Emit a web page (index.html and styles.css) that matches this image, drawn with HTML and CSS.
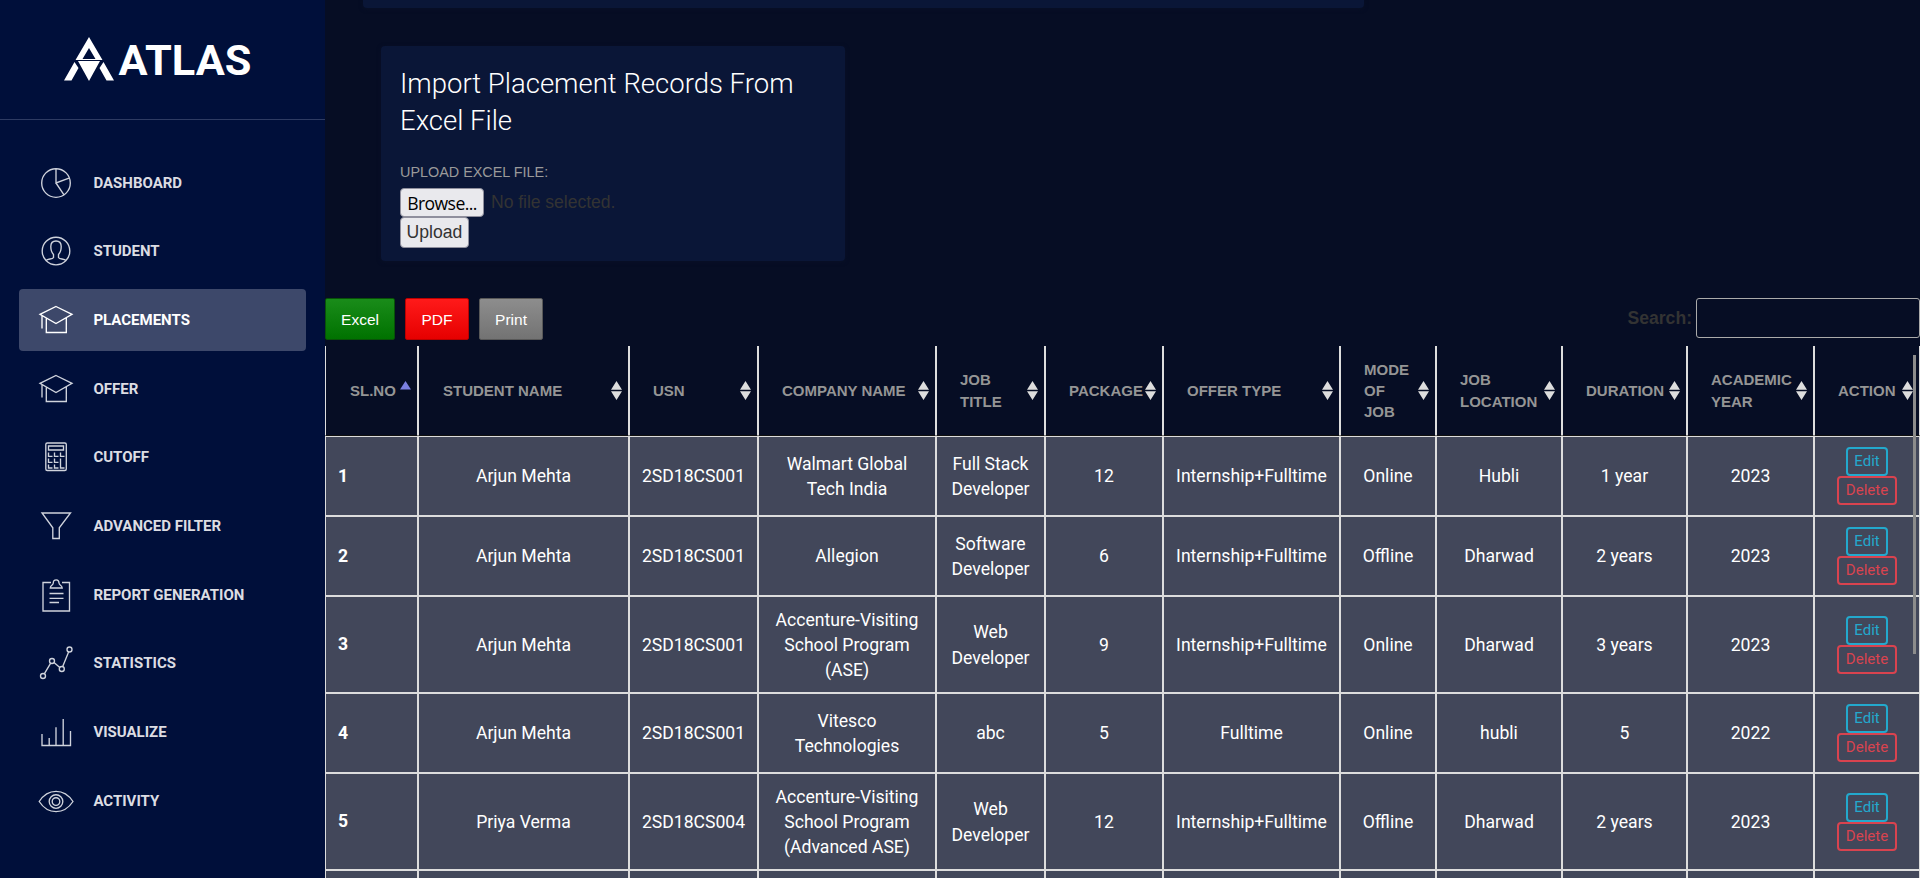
FILE: index.html
```
<!DOCTYPE html>
<html lang="en">
<head>
<meta charset="utf-8">
<title>Atlas - Placements</title>
<link rel="stylesheet" href="styles.css">
</head>
<body>
<div class="app">
  <aside class="sidebar">
    <div class="brand">
      <svg class="brand-mark" width="50" height="45" viewBox="0 0 50 45"><path fill="#fff" fill-rule="evenodd" d="M25 0 38.500 23H11.500ZM25 11 18.500 22H31.500ZM14 24H36L25 44ZM10.500 25 14.500 31 7.500 43.500H0ZM39.500 25 35.500 31 42.500 43.500H50Z"/></svg>
      <span class="brand-name">ATLAS</span>
    </div>
    <nav class="menu">
      <a class="item"><svg class="icon" viewBox="0 0 36 36"><circle cx="18" cy="18" r="14.300"/><path d="M18 3.700V18L31 13.200M18 18 26 29.800"/></svg>Dashboard</a>
      <a class="item"><svg class="icon" viewBox="0 0 36 36"><circle cx="18" cy="18" r="13.800"/><path d="M8 27.500C10 25.500 14.500 26.500 15.500 24.500V21.500C13.500 19.500 12.800 17 12.800 13.500 12.800 9.500 15 8 18 8S23.200 9.500 23.200 13.500C23.200 17 22.500 19.500 20.500 21.500V24.500C21.500 26.500 26 25.500 28 27.500"/></svg>Student</a>
      <a class="item active"><svg class="icon" viewBox="0 0 36 36"><path d="M18 4.500 34 12.300 18 21.500 2 12.300ZM8.300 16V30.500H28.300V16M4 13.500V26.500"/></svg>Placements</a>
      <a class="item"><svg class="icon" viewBox="0 0 36 36"><path d="M18 4.500 34 12.300 18 21.500 2 12.300ZM8.300 16V30.500H28.300V16M4 13.500V26.500"/></svg>Offer</a>
      <a class="item"><svg class="icon" viewBox="0 0 36 36"><rect x="7.800" y="4" width="20.500" height="27.500" rx="1.500"/><path d="M10.500 7H25.500V11H10.500ZM10.500 13.500V17.300H14.500M16.500 13.500V17.300H20.500M22.500 13.500V17.300H26.500M10.500 19.500V23.300H14.500M16.500 19.500V23.300H20.500M22.500 19.500V29H26.500M10.500 25.500V29H14.500M16.500 25.500V29H20.500"/></svg>Cutoff</a>
      <a class="item"><svg class="icon" viewBox="0 0 36 36"><path d="M4 5H32.500L21.300 19.800V30.500H14.800V19.800Z"/></svg>Advanced Filter</a>
      <a class="item"><svg class="icon" viewBox="0 0 36 36"><path d="M13 5.500H5V34H31.500V5.500H24M12.300 11C12.300 8 15 8.500 15.300 6 15.300 3.500 16.500 2.800 18.200 2.800S21 3.500 21 6C21.300 8.500 24 8 24.200 11ZM11.500 16.500H25.500M11.500 21.300H25.500M11.500 25.500H21"/></svg>Report Generation</a>
      <a class="item"><svg class="icon" viewBox="0 0 36 36"><circle cx="5" cy="31" r="2.500"/><circle cx="14" cy="16" r="2.500"/><circle cx="23.800" cy="24" r="2.500"/><circle cx="31.500" cy="4.500" r="2.500"/><path d="M6.300 28.800 12.700 18.200M16 17.600 21.800 22.400M24.700 21.600 30.600 6.900"/></svg>Statistics</a>
      <a class="item"><svg class="icon" viewBox="0 0 36 36"><path d="M4 20V31.500H32.500V17M11.200 24V31.500M18 13.200V31.500M25.200 5V31.500"/></svg>Visualize</a>
      <a class="item"><svg class="icon" viewBox="0 0 36 36"><path d="M1.200 18.500C10 5 26 5 35 18.500 26 32 10 32 1.200 18.500Z"/><circle cx="18" cy="18.500" r="6.800"/><circle cx="18" cy="18.500" r="3.800"/></svg>Activity</a>
    </nav>
  </aside>

  <main class="content">
    <div class="card card-prev"></div>
    <section class="card card-import">
      <h3 class="card-title">Import Placement Records From<br>Excel File</h3>
      <label class="upload-label">Upload Excel File:</label>
      <div class="file-row"><span class="form-btn browse">Browse...</span><span class="file-name">No file selected.</span></div>
      <span class="form-btn submit">Upload</span>
    </section>

    <div class="toolbar">
      <div class="exports">
        <span class="export excel">Excel</span>
        <span class="export pdf">PDF</span>
        <span class="export print">Print</span>
      </div>
      <label class="search">Search:<input class="search-input" type="text"></label>
    </div>

    <table class="records">
      <colgroup><col class="c1"><col class="c2"><col class="c3"><col class="c4"><col class="c5"><col class="c6"><col class="c7"><col class="c8"><col class="c9"><col class="c10"><col class="c11"><col class="c12"></colgroup>
      <thead>
        <tr>
          <th><div class="th asc wide">SL.NO<svg class="sort" viewBox="0 0 11 19"><path d="M5.500 0 11 8.500H0Z"/></svg></div></th>
          <th><div class="th wide">Student Name<svg class="sort" viewBox="0 0 11 19"><path d="M5.500 0 11 8.700H0ZM0 10.300H11L5.500 19Z"/></svg></div></th>
          <th><div class="th">USN<svg class="sort" viewBox="0 0 11 19"><path d="M5.500 0 11 8.700H0ZM0 10.300H11L5.500 19Z"/></svg></div></th>
          <th><div class="th">Company Name<svg class="sort" viewBox="0 0 11 19"><path d="M5.500 0 11 8.700H0ZM0 10.300H11L5.500 19Z"/></svg></div></th>
          <th><div class="th"><span>Job<br>Title</span><svg class="sort" viewBox="0 0 11 19"><path d="M5.500 0 11 8.700H0ZM0 10.300H11L5.500 19Z"/></svg></div></th>
          <th><div class="th">Package<svg class="sort" viewBox="0 0 11 19"><path d="M5.500 0 11 8.700H0ZM0 10.300H11L5.500 19Z"/></svg></div></th>
          <th><div class="th">Offer Type<svg class="sort" viewBox="0 0 11 19"><path d="M5.500 0 11 8.700H0ZM0 10.300H11L5.500 19Z"/></svg></div></th>
          <th><div class="th"><span>Mode<br>of<br>Job</span><svg class="sort" viewBox="0 0 11 19"><path d="M5.500 0 11 8.700H0ZM0 10.300H11L5.500 19Z"/></svg></div></th>
          <th><div class="th"><span>Job<br>Location</span><svg class="sort" viewBox="0 0 11 19"><path d="M5.500 0 11 8.700H0ZM0 10.300H11L5.500 19Z"/></svg></div></th>
          <th><div class="th">Duration<svg class="sort" viewBox="0 0 11 19"><path d="M5.500 0 11 8.700H0ZM0 10.300H11L5.500 19Z"/></svg></div></th>
          <th><div class="th"><span>Academic<br>Year</span><svg class="sort" viewBox="0 0 11 19"><path d="M5.500 0 11 8.700H0ZM0 10.300H11L5.500 19Z"/></svg></div></th>
          <th><div class="th">Action<svg class="sort" viewBox="0 0 11 19"><path d="M5.500 0 11 8.700H0ZM0 10.300H11L5.500 19Z"/></svg></div></th>
        </tr>
      </thead>
      <tbody>
        <tr class="short"><td class="num">1</td><td>Arjun Mehta</td><td>2SD18CS001</td><td>Walmart Global<br>Tech India</td><td>Full Stack<br>Developer</td><td>12</td><td>Internship+Fulltime</td><td>Online</td><td>Hubli</td><td>1 year</td><td>2023</td><td class="act-cell"><div class="actions"><span class="act edit">Edit</span><span class="act del">Delete</span></div></td></tr>
        <tr class="short"><td class="num">2</td><td>Arjun Mehta</td><td>2SD18CS001</td><td>Allegion</td><td>Software<br>Developer</td><td>6</td><td>Internship+Fulltime</td><td>Offline</td><td>Dharwad</td><td>2 years</td><td>2023</td><td class="act-cell"><div class="actions"><span class="act edit">Edit</span><span class="act del">Delete</span></div></td></tr>
        <tr class="tall"><td class="num">3</td><td>Arjun Mehta</td><td>2SD18CS001</td><td>Accenture-Visiting<br>School Program<br>(ASE)</td><td>Web<br>Developer</td><td>9</td><td>Internship+Fulltime</td><td>Online</td><td>Dharwad</td><td>3 years</td><td>2023</td><td class="act-cell"><div class="actions"><span class="act edit">Edit</span><span class="act del">Delete</span></div></td></tr>
        <tr class="short"><td class="num">4</td><td>Arjun Mehta</td><td>2SD18CS001</td><td>Vitesco<br>Technologies</td><td>abc</td><td>5</td><td>Fulltime</td><td>Online</td><td>hubli</td><td>5</td><td>2022</td><td class="act-cell"><div class="actions"><span class="act edit">Edit</span><span class="act del">Delete</span></div></td></tr>
        <tr class="tall"><td class="num">5</td><td>Priya Verma</td><td>2SD18CS004</td><td>Accenture-Visiting<br>School Program<br>(Advanced ASE)</td><td>Web<br>Developer</td><td>12</td><td>Internship+Fulltime</td><td>Offline</td><td>Dharwad</td><td>2 years</td><td>2023</td><td class="act-cell"><div class="actions"><span class="act edit">Edit</span><span class="act del">Delete</span></div></td></tr>
        <tr class="short"><td></td><td></td><td></td><td></td><td></td><td></td><td></td><td></td><td></td><td></td><td></td><td></td></tr>
      </tbody>
    </table>
    <div class="scroll-thumb"></div>
  </main>
</div>
</body>
</html>
```
FILE: styles.css
```
* { box-sizing: border-box; }
body { margin: 0; height: 878px; overflow: hidden; background: #060d24; font-family: "Liberation Sans", Arial, sans-serif; font-size: 17.6px; line-height: 1.42857; color: #333; }
.app { display: flex; height: 878px; overflow: hidden; }

.sidebar { flex: 0 0 325px; background: #000f3a; }
.brand { height: 120px; border-bottom: 1px solid #2e3b62; display: flex; padding: 37px 0 0 63.500px; gap: 5px; }
.brand-name { color: #fff; font: bold 43.300px/48px Roboto, sans-serif; }
.menu { display: flex; flex-direction: column; gap: 7px; padding: 31.700px 19px 0; }
.item { height: 61.700px; display: flex; align-items: center; gap: 19px; padding-left: 19.400px; border-radius: 4px; color: #dcdde3; font: bold 15px/30px Roboto, sans-serif; text-transform: uppercase; }
.icon { width: 36px; height: 36px; fill: none; stroke: #cfd3dc; stroke-width: 1.350; }
.active { background: #3d486a; color: #fff; }
.active .icon { stroke: #fff; }

.content { position: relative; flex: 1; }
.card { background: #0a1637; border-radius: 4px; box-shadow: 0 1px 4px rgba(10, 18, 40, .8); }
.card-prev { width: 1001px; height: 8px; margin-left: 38px; border-radius: 0 0 4px 4px; }
.card-import { width: 464px; height: 215px; margin: 38px 0 0 55.500px; padding: 19px 20px 0 19.500px; }
.card-title { margin: 0; color: #fff; font: 300 27.500px/37px Roboto, sans-serif; }
.upload-label { display: block; margin-top: 20px; color: #9a9a9a; font-size: 14.400px; line-height: 26px; text-transform: uppercase; }
.file-row { display: flex; align-items: center; height: 29px; margin-top: 3px; }
.form-btn { display: inline-block; background: #e9e9ed; border: 1px solid #8f8f9d; border-radius: 4px; font-size: 17.600px; text-align: center; }
.browse { width: 84px; height: 29px; line-height: 28px; color: #000; font-family: "Open Sans", sans-serif; letter-spacing: -.6px; }
.file-name { margin-left: 7px; font-size: 17.600px; letter-spacing: -.05px; color: #333; }
.submit { display: block; width: 69px; height: 31px; line-height: 29px; color: #333; }

.toolbar { display: flex; justify-content: space-between; margin-top: 37px; height: 48px; }
.exports { display: flex; gap: 10px; }
.export { height: 42px; width: 64px; border: 1px solid; border-radius: 2px; color: #fff; font-size: 15.500px; line-height: 41px; text-align: center; }
.excel { width: 70px; background: linear-gradient(#1a8c1a, #007200); border-color: #085208; }
.pdf { background: linear-gradient(#ff1a1a, #e60000); border-color: #b00; }
.print { background: linear-gradient(#8d8d8d, #737373); border-color: #585858; }
.search { display: flex; font-weight: bold; line-height: 40px; gap: 4px; }
.search-input { width: 224px; height: 40px; border: 1px solid #aaa; border-radius: 3px; background: transparent; }

.records { width: 1595px; table-layout: fixed; border-collapse: separate; border-spacing: 0; }
.c1 { width: 93px; }
.c2 { width: 211px; }
.c3 { width: 129px; }
.c4 { width: 178px; }
.c5 { width: 109px; }
.c6 { width: 118px; }
.c7 { width: 177px; }
.c8 { width: 96px; }
.c9 { width: 126px; }
.c10 { width: 125px; }
.c11 { width: 127px; }
.c12 { width: 106px; }
.records th { height: 90px; padding: 0; border: solid #ddd; border-width: 0 1px; border-bottom: 1px solid #111; }
.th { display: flex; justify-content: space-between; align-items: center; padding: 0 6.500px 0 23px; color: #959595; font-size: 15px; line-height: 21.300px; text-align: left; text-transform: uppercase; }
.wide { padding-left: 24px; }
.sort { flex: none; width: 11px; height: 19px; fill: #ddd; }
.asc .sort { fill: #7b7fe0; }
.records td { padding: 2px 0 0; border: 1px solid #ddd; background: #42475a; color: #fff; font-family: Roboto, sans-serif; line-height: 25.140px; text-align: center; vertical-align: middle; }
.records .num { padding-left: 12px; text-align: left; font-weight: bold; }
.tall .num { padding-top: 0; }
.records .act-cell { padding-top: 0; }
.short { height: 80px; }
.tall { height: 97px; }
.actions { display: flex; flex-direction: column; align-items: center; }
.act { height: 29px; padding: 0 6.400px; border: 2px solid; border-radius: 4px; font-size: 15px; line-height: 24px; }
.edit { color: #23a9cd; }
.del { color: #d9434f; }
.scroll-thumb { position: absolute; left: 1588px; top: 355px; width: 3px; height: 299px; background: #8c8c8c; }
```
